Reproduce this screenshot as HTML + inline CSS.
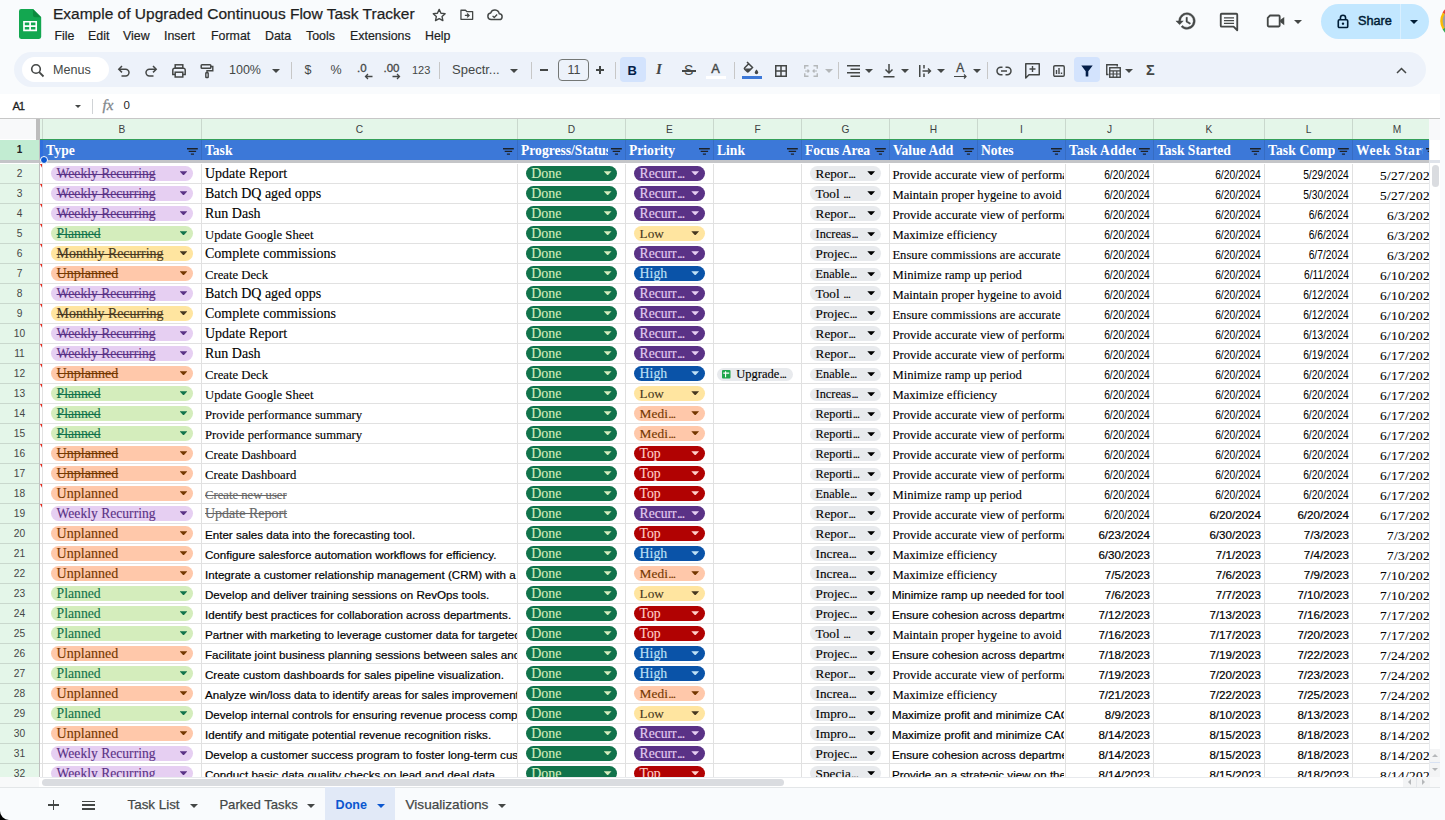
<!DOCTYPE html><html lang="en"><head><meta charset="utf-8"><title>Example of Upgraded Continuous Flow Task Tracker</title><style>
*{box-sizing:border-box}
html,body{margin:0;padding:0}
body{width:1445px;height:820px;position:relative;overflow:hidden;background:#f9fbfd;font-family:"Liberation Sans",sans-serif;color:#1f1f1f}
.abs,.t{position:absolute}
.t{white-space:nowrap;line-height:1}
svg{position:absolute;overflow:visible}
#grid{position:absolute;left:0;top:118px;width:1440px;height:669px;background:#fff;overflow:hidden}
.c{position:absolute;overflow:hidden;white-space:nowrap;height:19px}
.sb,.ss,.sg,.chip b{-webkit-text-stroke:.12px currentColor}
.sa,.da{-webkit-text-stroke:.2px currentColor}
.dm{-webkit-text-stroke:.1px currentColor}
.c span.x{position:absolute;left:3px;bottom:2px;line-height:1}
.c span.r{position:absolute;right:3px;bottom:2px;line-height:1}
.sb{font-family:"Liberation Serif",serif;font-size:14px;color:#000;bottom:1.800px !important}
.ss{font-family:"Liberation Serif",serif;font-size:12.7px;color:#000;bottom:1px !important}
.sa{font-family:"Liberation Sans",sans-serif;font-size:11.6px;color:#000}
.sg{font-family:"Liberation Serif",serif;color:#666;text-decoration:line-through}
.dn{font-family:"Liberation Sans",sans-serif;font-size:13px;color:#000;transform:scaleX(.79);transform-origin:100% 50%;display:inline-block}
.da{font-family:"Liberation Sans",sans-serif;font-size:11.6px;color:#000}
.dm{font-family:"Liberation Serif",serif;font-size:13.4px;color:#000;letter-spacing:.3px;bottom:1px !important}
.chip{position:absolute;top:1.500px;height:15.500px;border-radius:8px;font-family:"Liberation Serif",serif;line-height:15.500px;overflow:hidden;white-space:nowrap}
.chip.sm{top:3.600px;height:13.500px;line-height:13.500px;border-radius:7px}
.chip b{font-weight:400;position:absolute;left:6px;top:.2px}
.chip u{text-decoration:none;letter-spacing:-1px;margin-left:.3px}
.chip i{position:absolute;right:5.900px;top:5.700px;width:7.800px;height:4.200px;background:currentColor;clip-path:polygon(0 0,100% 0,50% 100%)}
.chip.sm i{top:4.700px}
.st{text-decoration:line-through;text-decoration-thickness:1px}
.rh{position:absolute;left:0;width:39px;height:19px;background:#e4f6e9;font-size:10.200px;color:#444746;text-align:center;line-height:19px}
.ch{position:absolute;top:1px;height:20px;background:#e4f6e9;font-size:10.200px;color:#3c4043;text-align:center;line-height:22px}
.hd{position:absolute;top:22px;height:20px;background:#3c78d8;color:#fff;font-family:"Liberation Serif",serif;font-weight:700;font-size:13.6px;overflow:hidden;white-space:nowrap}
.hd span{position:absolute;left:3px;top:3.500px;line-height:1}
.hd em{position:absolute;right:0;top:0;width:18px;height:20px;background:#3c78d8}
.vl{position:absolute;width:1px;background:#e1e1e1}
.hl{position:absolute;height:1px;background:#e1e1e1;left:40px;width:1389px}
.nt{position:absolute;left:40px;width:2.600px;height:4.800px;background:#e8261b;clip-path:polygon(0 0,100% 0,100% 100%)}
</style></head><body>
<svg style="left:18.600px;top:9.100px" width="22.200" height="30" viewBox="0 0 23 31">
<path d="M2.200 0h12.300L23 8.500V28.800a2.200 2.200 0 0 1-2.200 2.200H2.200A2.200 2.200 0 0 1 0 28.800V2.200A2.200 2.200 0 0 1 2.200 0z" fill="#13a750"/>
<path d="M14.500 0L23 8.500h-6.300a2.200 2.200 0 0 1-2.200-2.200z" fill="#0c8a3e"/>
<path d="M4.300 12.300h14.400v10.600H4.300zM6 14v2.700h4.600V14zm6.400 0v2.700H17V14zM6 18.500v2.700h4.600v-2.700zm6.400 0v2.700H17v-2.700z" fill="#fff" fill-rule="evenodd"/>
</svg>
<div class="t" style="left:53px;top:6px;font-size:15.5px;color:#1f1f1f;font-weight:400;-webkit-text-stroke:.25px">Example of Upgraded Continuous Flow Task Tracker</div>
<svg style="left:430.600px;top:6.800px" width="16.400" height="16.400" viewBox="0 0 24 24"><path d="M12 3.5l2.6 5.6 6.1.7-4.5 4.2 1.2 6-5.4-3-5.4 3 1.2-6-4.5-4.2 6.1-.7z" fill="none" stroke="#444746" stroke-width="2" stroke-linejoin="round"/></svg>
<svg style="left:459px;top:7px" width="15.600" height="15.600" viewBox="0 0 24 24"><path d="M3 5h7l2 2h9v12H3z" fill="none" stroke="#444746" stroke-width="2" stroke-linejoin="round"/><path d="M9 13h6m-2.5-3l3 3-3 3" fill="none" stroke="#444746" stroke-width="2"/></svg>
<svg style="left:485.500px;top:6.300px" width="17.600" height="17.600" viewBox="0 0 24 24"><path d="M7 18.5a4.5 4.5 0 0 1-.6-8.95A6 6 0 0 1 18 10.5a4 4 0 0 1 0 8z" fill="none" stroke="#444746" stroke-width="2" stroke-linejoin="round"/><path d="M9 13.5l2.2 2.2 4-4" fill="none" stroke="#444746" stroke-width="1.8"/></svg>
<div class="t" style="left:54.4px;top:29.7px;font-size:12.4px;color:#1f1f1f;font-weight:400;-webkit-text-stroke:.2px">File</div>
<div class="t" style="left:88px;top:29.7px;font-size:12.4px;color:#1f1f1f;font-weight:400;-webkit-text-stroke:.2px">Edit</div>
<div class="t" style="left:123px;top:29.7px;font-size:12.4px;color:#1f1f1f;font-weight:400;-webkit-text-stroke:.2px">View</div>
<div class="t" style="left:164px;top:29.7px;font-size:12.4px;color:#1f1f1f;font-weight:400;-webkit-text-stroke:.2px">Insert</div>
<div class="t" style="left:211px;top:29.7px;font-size:12.4px;color:#1f1f1f;font-weight:400;-webkit-text-stroke:.2px">Format</div>
<div class="t" style="left:265px;top:29.7px;font-size:12.4px;color:#1f1f1f;font-weight:400;-webkit-text-stroke:.2px">Data</div>
<div class="t" style="left:306px;top:29.7px;font-size:12.4px;color:#1f1f1f;font-weight:400;-webkit-text-stroke:.2px">Tools</div>
<div class="t" style="left:350px;top:29.7px;font-size:12.4px;color:#1f1f1f;font-weight:400;-webkit-text-stroke:.2px">Extensions</div>
<div class="t" style="left:425px;top:29.7px;font-size:12.4px;color:#1f1f1f;font-weight:400;-webkit-text-stroke:.2px">Help</div>
<svg style="left:1175px;top:10px" width="22" height="22" viewBox="0 0 24 24"><path d="M13 3a9 9 0 0 0-9 9H1l3.9 3.9.1.1L9 12H6a7 7 0 1 1 2.05 4.95l-1.4 1.4A9 9 0 1 0 13 3zm-1 5v5l4.25 2.5.75-1.25-3.5-2.1V8z" fill="#444746" stroke="#444746" stroke-width=".5"/></svg>
<svg style="left:1218px;top:11px" width="22" height="22" viewBox="0 0 24 24"><path d="M4 3h16a1 1 0 0 1 1 1v17l-4-4H4a1 1 0 0 1-1-1V4a1 1 0 0 1 1-1z" fill="none" stroke="#444746" stroke-width="2" stroke-linejoin="round"/><path d="M6.5 7.5h11M6.5 10.5h11M6.5 13.5h11" stroke="#444746" stroke-width="1.6"/></svg>
<svg style="left:1265px;top:10px" width="22" height="22" viewBox="0 0 24 24"><path d="M5.5 6H15a1 1 0 0 1 1 1v10a1 1 0 0 1-1 1H4a1 1 0 0 1-1-1V8.5z" fill="none" stroke="#444746" stroke-width="2" stroke-linejoin="round"/><path d="M16.5 11l4.5-3.5v9L16.5 13z" fill="#444746"/></svg>
<div class="abs" style="left:1293.5px;top:19.5px;border-left:4px solid transparent;border-right:4px solid transparent;border-top:4px solid #444746"></div>
<div class="abs" style="left:1321px;top:4px;width:108px;height:35px;border-radius:18px;background:#c2e7ff"></div>
<div class="abs" style="left:1399.5px;top:4px;width:1.5px;height:35px;background:#d9efff"></div>
<svg style="left:1337px;top:13.500px" width="12" height="15" viewBox="0 0 14 17"><rect x="1.5" y="6.5" width="11" height="9" rx="1.3" fill="none" stroke="#001d35" stroke-width="1.9"/><path d="M4 6.500V4.200a3 3 0 0 1 6 0v2.300" fill="none" stroke="#001d35" stroke-width="1.900"/><circle cx="7" cy="11" r="1.400" fill="#001d35"/></svg>
<div class="t" style="left:1358px;top:14.8px;font-size:12.7px;color:#001d35;font-weight:400;-webkit-text-stroke:.45px">Share</div>
<div class="abs" style="left:1410px;top:19.5px;border-left:4.5px solid transparent;border-right:4.5px solid transparent;border-top:4.5px solid #001d35"></div>
<svg style="left:1439.500px;top:4px" width="34" height="34" viewBox="0 0 34 34"><circle cx="17" cy="17" r="15.5" fill="#9aa0a6"/><path d="M17 1.5A15.500 15.500 0 0 0 3.600 9.300" fill="none" stroke="#ea4335" stroke-width="2.4"/><path d="M3.600 9.300A15.500 15.500 0 0 0 3.600 24.700" fill="none" stroke="#fbbc04" stroke-width="2.4"/><path d="M3.600 24.700A15.500 15.500 0 0 0 17 32.500" fill="none" stroke="#34a853" stroke-width="2.4"/></svg>
<div class="abs" style="left:14px;top:52px;width:1412px;height:35px;border-radius:18px;background:#edf2fa"></div>
<div class="abs" style="left:22px;top:57px;width:87px;height:25px;border-radius:13px;background:#fff"></div>
<div class="abs" style="left:0;top:.8px;width:0;height:0">
<svg style="left:30px;top:62px" width="15" height="15" viewBox="0 0 15 15"><circle cx="6" cy="6" r="4.3" fill="none" stroke="#444746" stroke-width="1.6"/><path d="M9.2 9.2l4.3 4.3" stroke="#444746" stroke-width="1.8"/></svg>
<div class="t" style="left:53px;top:63px;font-size:12.6px;color:#444746;font-weight:400;">Menus</div>
<svg style="left:117px;top:63px" width="14" height="14" viewBox="0 0 14 14"><path d="M2 5.2h6.6a3.4 3.4 0 0 1 0 6.8H4.5" fill="none" stroke="#444746" stroke-width="1.5"/><path d="M5 2L1.8 5.2 5 8.4" fill="none" stroke="#444746" stroke-width="1.5"/></svg>
<svg style="left:144px;top:63px" width="14" height="14" viewBox="0 0 14 14"><path d="M12 5.2H5.4a3.4 3.4 0 0 0 0 6.8h4.1" fill="none" stroke="#444746" stroke-width="1.5"/><path d="M9 2l3.2 3.2L9 8.4" fill="none" stroke="#444746" stroke-width="1.5"/></svg>
<svg style="left:171px;top:62px" width="16" height="16" viewBox="0 0 16 16"><rect x="4.2" y="1.8" width="7.6" height="3.4" fill="none" stroke="#444746" stroke-width="1.5"/><path d="M4 11.5H1.8V7a1.7 1.7 0 0 1 1.7-1.7h9A1.7 1.7 0 0 1 14.200 7v4.500H12" fill="none" stroke="#444746" stroke-width="1.5"/><rect x="4.2" y="9.2" width="7.6" height="4.8" fill="none" stroke="#444746" stroke-width="1.5"/></svg>
<svg style="left:199px;top:62px" width="16" height="16" viewBox="0 0 16 16"><rect x="2.2" y="1.7" width="9.600" height="3.6" rx=".8" fill="none" stroke="#444746" stroke-width="1.5"/><path d="M11.8 3.500h2v4.200H8v2.300" fill="none" stroke="#444746" stroke-width="1.4"/><rect x="6.800" y="9.800" width="2.400" height="4.700" rx=".5" fill="none" stroke="#444746" stroke-width="1.4"/></svg>
<div class="t" style="left:229px;top:63.5px;font-size:12.5px;color:#444746;font-weight:400;">100%</div>
<div class="abs" style="left:272px;top:68.3px;border-left:4px solid transparent;border-right:4px solid transparent;border-top:4px solid #444746"></div>
<div class="abs" style="left:290.5px;top:61px;width:1px;height:17px;background:#c7c7c7"></div>
<div class="t" style="left:304.5px;top:63px;font-size:12.5px;color:#444746;font-weight:400;">$</div>
<div class="t" style="left:330.5px;top:63px;font-size:12.5px;color:#444746;font-weight:400;">%</div>
<div class="t" style="left:357px;top:62px;font-size:11.5px;color:#444746;font-weight:400;-webkit-text-stroke:.3px">.0</div>
<svg style="left:364px;top:72px" width="9" height="7" viewBox="0 0 9 7"><path d="M8.500 3.500H1.500M4 1L1.500 3.500 4 6" fill="none" stroke="#444746" stroke-width="1.3"/></svg>
<div class="t" style="left:383.5px;top:62px;font-size:11.5px;color:#444746;font-weight:400;-webkit-text-stroke:.3px">.00</div>
<svg style="left:392px;top:72px" width="9" height="7" viewBox="0 0 9 7"><path d="M.5 3.500h7M5 1l2.500 2.500L5 6" fill="none" stroke="#444746" stroke-width="1.3"/></svg>
<div class="t" style="left:412px;top:64px;font-size:11px;color:#444746;font-weight:400;">123</div>
<div class="abs" style="left:438.5px;top:61px;width:1px;height:17px;background:#c7c7c7"></div>
<div class="t" style="left:452px;top:62.5px;font-size:13px;color:#444746;font-weight:400;">Spectr...</div>
<div class="abs" style="left:510px;top:68.3px;border-left:4px solid transparent;border-right:4px solid transparent;border-top:4px solid #444746"></div>
<div class="abs" style="left:530.5px;top:61px;width:1px;height:17px;background:#c7c7c7"></div>
<div class="abs" style="left:540.300px;top:68.600px;width:8px;height:1.300px;background:#444746"></div>
<div class="abs" style="left:558.300px;top:58.300px;width:30.400px;height:21.500px;border:1px solid #747775;border-radius:4px"></div>
<div class="t" style="left:567.5px;top:63.5px;font-size:12.5px;color:#444746;font-weight:400;">11</div>
<div class="abs" style="left:595.800px;top:68.600px;width:8.600px;height:1.300px;background:#444746"></div><div class="abs" style="left:599.450px;top:64.950px;width:1.300px;height:8.600px;background:#444746"></div>
<div class="abs" style="left:615.0px;top:61px;width:1px;height:17px;background:#c7c7c7"></div>
<div class="abs" style="left:620px;top:56px;width:26px;height:25.500px;border-radius:4px;background:#d3e3fd"></div>
<div class="t" style="left:627.5px;top:63px;font-size:13px;color:#041e49;font-weight:700;">B</div>
<div class="t" style="left:656px;top:61.5px;font-size:15px;color:#444746;font-weight:400;font-family:'Liberation Serif', serif;font-style:italic;font-weight:700">I</div>
<div class="t" style="left:684px;top:62px;font-size:14px;color:#444746;font-weight:400;">S</div>
<div class="abs" style="left:681.500px;top:69.400px;width:14px;height:1.500px;background:#444746"></div>
<div class="t" style="left:711.3px;top:61.8px;font-size:12.8px;color:#444746;font-weight:400;-webkit-text-stroke:.4px">A</div>
<div class="abs" style="left:706px;top:75.500px;width:20px;height:3px;background:#fff"></div>
<div class="abs" style="left:734.0px;top:61px;width:1px;height:17px;background:#c7c7c7"></div>
<svg style="left:744px;top:60px" width="16" height="14" viewBox="0 0 16 14"><path d="M3 1l5.500 5.500-4 4a1 1 0 0 1-1.400 0L.7 8.100a1 1 0 0 1 0-1.400L5 2.500" fill="none" stroke="#444746" stroke-width="1.500"/><path d="M1 7.500h7L4 11z" fill="#444746"/><path d="M12.500 8.500s1.700 1.900 1.700 3a1.700 1.700 0 0 1-3.400 0c0-1.100 1.700-3 1.700-3z" fill="#444746"/></svg>
<div class="abs" style="left:742px;top:75.500px;width:20px;height:3px;background:#3c78d8"></div>
<svg style="left:775px;top:64px" width="12" height="12" viewBox="0 0 12 12"><rect x=".75" y=".75" width="10.500" height="10.500" fill="none" stroke="#444746" stroke-width="1.500"/><path d="M6 .5v11M.5 6h11" stroke="#444746" stroke-width="1.500"/></svg>
<svg style="left:804px;top:64px" width="14" height="12" viewBox="0 0 14 12"><path d="M4.500 .75H.75v3M9.500 .75h3.750v3M4.500 11.250H.75v-3M9.500 11.250h3.750v-3" fill="none" stroke="#b4b7b9" stroke-width="1.400"/><path d="M1 6h4M3.500 4.500L5 6 3.500 7.500M13 6H9M10.500 4.500L9 6l1.500 1.500" fill="none" stroke="#b4b7b9" stroke-width="1.200"/></svg>
<div class="abs" style="left:825px;top:68.3px;border-left:4px solid transparent;border-right:4px solid transparent;border-top:4px solid #b4b7b9"></div>
<div class="abs" style="left:837.5px;top:61px;width:1px;height:17px;background:#c7c7c7"></div>
<svg style="left:847px;top:64px" width="13" height="12" viewBox="0 0 13 12"><path d="M0 .75h13M3.500 4.250H13M0 7.750h13M3.500 11.250H13" stroke="#444746" stroke-width="1.400"/></svg>
<div class="abs" style="left:865px;top:68.3px;border-left:4px solid transparent;border-right:4px solid transparent;border-top:4px solid #444746"></div>
<svg style="left:883px;top:63px" width="12" height="14" viewBox="0 0 12 14"><path d="M6 0v9M2.500 5.500L6 9l3.500-3.500" fill="none" stroke="#444746" stroke-width="1.500"/><path d="M.5 12.750h11" stroke="#444746" stroke-width="1.500"/></svg>
<div class="abs" style="left:901px;top:68.3px;border-left:4px solid transparent;border-right:4px solid transparent;border-top:4px solid #444746"></div>
<svg style="left:919px;top:64px" width="13" height="12" viewBox="0 0 13 12"><path d="M.75 0v12M5 0v3.500M5 8.500V12" stroke="#444746" stroke-width="1.500"/><path d="M3.500 6h8M9 3.500L11.500 6 9 8.500" fill="none" stroke="#444746" stroke-width="1.400"/></svg>
<div class="abs" style="left:937px;top:68.3px;border-left:4px solid transparent;border-right:4px solid transparent;border-top:4px solid #444746"></div>
<div class="t" style="left:956.3px;top:61.5px;font-size:12px;color:#444746;font-weight:400;-webkit-text-stroke:.3px">A</div>
<svg style="left:954px;top:73px" width="14" height="6" viewBox="0 0 14 6"><path d="M0 2.500h12M10 .5l2 2-2 2" fill="none" stroke="#444746" stroke-width="1.200"/></svg>
<div class="abs" style="left:973px;top:68.3px;border-left:4px solid transparent;border-right:4px solid transparent;border-top:4px solid #444746"></div>
<div class="abs" style="left:987.0px;top:61px;width:1px;height:17px;background:#c7c7c7"></div>
<svg style="left:996px;top:65px" width="16" height="10" viewBox="0 0 16 10"><path d="M6.500 1.250H4.750a3.750 3.750 0 0 0 0 7.500H6.500M9.500 1.250h1.750a3.750 3.750 0 0 1 0 7.500H9.500M5 5h6" fill="none" stroke="#444746" stroke-width="1.500"/></svg>
<svg style="left:1025px;top:62px" width="15" height="16" viewBox="0 0 15 16"><path d="M.75 .75h13.500v11H4L.75 15z" fill="none" stroke="#444746" stroke-width="1.500" stroke-linejoin="round"/><path d="M7.500 3v6M4.500 6h6" stroke="#444746" stroke-width="1.400"/></svg>
<svg style="left:1053px;top:64px" width="12" height="12" viewBox="0 0 12 12"><rect x=".75" y=".75" width="10.500" height="10.500" rx="1.200" fill="none" stroke="#444746" stroke-width="1.400"/><path d="M3.500 9V5M6 9V3M8.500 9V7.500" stroke="#444746" stroke-width="1.400"/></svg>
<div class="abs" style="left:1074px;top:56px;width:26px;height:25.500px;border-radius:4px;background:#d3e3fd"></div>
<svg style="left:1081px;top:64px" width="12" height="12" viewBox="0 0 12 12"><path d="M.3 .5h11.400L7.300 6.200V11.500H4.700V6.200z" fill="#041e49"/></svg>
<svg style="left:1106px;top:63px" width="15" height="14" viewBox="0 0 15 14"><path d="M2.500 10.500H.75V.75h10.500V2.500" fill="none" stroke="#444746" stroke-width="1.400"/><rect x="3.750" y="3.750" width="10.500" height="9.500" fill="none" stroke="#444746" stroke-width="1.400"/><path d="M3.500 6.800h11M7.200 6.800V13.500M10.800 6.800V13.500M3.500 10h11" stroke="#444746" stroke-width="1.200"/></svg>
<div class="abs" style="left:1125px;top:68.3px;border-left:4px solid transparent;border-right:4px solid transparent;border-top:4px solid #444746"></div>
<div class="t" style="left:1146px;top:61.8px;font-size:14.5px;color:#444746;font-weight:700;">Σ</div>
<svg style="left:1396px;top:66px" width="11" height="7" viewBox="0 0 11 7"><path d="M1 6l4.500-4.500L10 6" fill="none" stroke="#444746" stroke-width="1.500"/></svg>
</div>
<div class="abs" style="left:0;top:94px;width:1440px;height:25px;background:#fff"></div>
<div class="t" style="left:12.5px;top:100.5px;font-size:11.3px;color:#1f1f1f;font-weight:400;letter-spacing:-1.300px;-webkit-text-stroke:.3px">A1</div>
<div class="abs" style="left:74.5px;top:104.55px;border-left:3.5px solid transparent;border-right:3.5px solid transparent;border-top:3.5px solid #444746"></div>
<div class="abs" style="left:92.300px;top:99px;width:1px;height:14.500px;background:#d0d3d6"></div>
<div class="t" style="left:102.5px;top:97.8px;font-size:15px;color:#80868b;font-weight:400;font-family:'Liberation Serif', serif;font-style:italic;-webkit-text-stroke:.3px">fx</div>
<div class="t" style="left:123.5px;top:100px;font-size:11.5px;color:#1f1f1f;font-weight:400;">0</div>
<div id="grid">
<div class="abs" style="left:0;top:0;width:1441px;height:1px;background:#c7c7c7"></div>
<div class="abs" style="left:0;top:1px;width:36px;height:20px;background:#f8f9fa"></div>
<div class="abs" style="left:36px;top:1px;width:4px;height:21px;background:#bdbdbd"></div>
<div class="ch" style="left:40px;width:2px"></div>
<div class="vl" style="left:42px;top:1px;height:20px;background:#c9d8cd"></div>
<div class="ch" style="left:43px;width:158px">B</div>
<div class="vl" style="left:201px;top:1px;height:20px;background:#c9d8cd"></div>
<div class="ch" style="left:202px;width:315px">C</div>
<div class="vl" style="left:517px;top:1px;height:20px;background:#c9d8cd"></div>
<div class="ch" style="left:518px;width:107px">D</div>
<div class="vl" style="left:625px;top:1px;height:20px;background:#c9d8cd"></div>
<div class="ch" style="left:626px;width:87px">E</div>
<div class="vl" style="left:713px;top:1px;height:20px;background:#c9d8cd"></div>
<div class="ch" style="left:714px;width:87px">F</div>
<div class="vl" style="left:801px;top:1px;height:20px;background:#c9d8cd"></div>
<div class="ch" style="left:802px;width:87px">G</div>
<div class="vl" style="left:889px;top:1px;height:20px;background:#c9d8cd"></div>
<div class="ch" style="left:890px;width:87px">H</div>
<div class="vl" style="left:977px;top:1px;height:20px;background:#c9d8cd"></div>
<div class="ch" style="left:978px;width:87px">I</div>
<div class="vl" style="left:1065px;top:1px;height:20px;background:#c9d8cd"></div>
<div class="ch" style="left:1066px;width:87px">J</div>
<div class="vl" style="left:1153px;top:1px;height:20px;background:#c9d8cd"></div>
<div class="ch" style="left:1154px;width:110px">K</div>
<div class="vl" style="left:1264px;top:1px;height:20px;background:#c9d8cd"></div>
<div class="ch" style="left:1265px;width:87px">L</div>
<div class="vl" style="left:1352px;top:1px;height:20px;background:#c9d8cd"></div>
<div class="ch" style="left:1353px;width:76px"><span style="position:absolute;left:0;width:88px;text-align:center">M</span></div>
<div class="abs" style="left:40px;top:21px;width:1389px;height:1.500px;background:#34a05a"></div>
<div class="rh" style="top:22px;height:20px;background:#c2ecd2;color:#202124;font-weight:700;font-size:10px;line-height:20px">1</div>
<div class="hd" style="left:40px;width:3px;background:#2f6fde"></div>
<div class="hd" style="left:43px;width:159px"><span style="letter-spacing:.15px">Type</span><em></em><svg style="right:4.400px;top:7.600px" width="10.800" height="7" viewBox="0 0 10.800 7"><path d="M0 .7h10.800M1.700 3.400h7.400M3.900 6.100h3.100" stroke="#1d2228" stroke-width="1.400"/></svg></div>
<div class="vl" style="left:201px;top:22px;height:20px;background:#366cc2"></div>
<div class="hd" style="left:202px;width:316px"><span>Task</span><em></em><svg style="right:4.400px;top:7.600px" width="10.800" height="7" viewBox="0 0 10.800 7"><path d="M0 .7h10.800M1.700 3.400h7.400M3.900 6.100h3.100" stroke="#1d2228" stroke-width="1.400"/></svg></div>
<div class="vl" style="left:517px;top:22px;height:20px;background:#366cc2"></div>
<div class="hd" style="left:518px;width:108px"><span>Progress/Status</span><em></em><svg style="right:4.400px;top:7.600px" width="10.800" height="7" viewBox="0 0 10.800 7"><path d="M0 .7h10.800M1.700 3.400h7.400M3.900 6.100h3.100" stroke="#1d2228" stroke-width="1.400"/></svg></div>
<div class="vl" style="left:625px;top:22px;height:20px;background:#366cc2"></div>
<div class="hd" style="left:626px;width:88px"><span>Priority</span><em></em><svg style="right:4.400px;top:7.600px" width="10.800" height="7" viewBox="0 0 10.800 7"><path d="M0 .7h10.800M1.700 3.400h7.400M3.900 6.100h3.100" stroke="#1d2228" stroke-width="1.400"/></svg></div>
<div class="vl" style="left:713px;top:22px;height:20px;background:#366cc2"></div>
<div class="hd" style="left:714px;width:88px"><span>Link</span><em></em><svg style="right:4.400px;top:7.600px" width="10.800" height="7" viewBox="0 0 10.800 7"><path d="M0 .7h10.800M1.700 3.400h7.400M3.900 6.100h3.100" stroke="#1d2228" stroke-width="1.400"/></svg></div>
<div class="vl" style="left:801px;top:22px;height:20px;background:#366cc2"></div>
<div class="hd" style="left:802px;width:88px"><span>Focus Area</span><em></em><svg style="right:4.400px;top:7.600px" width="10.800" height="7" viewBox="0 0 10.800 7"><path d="M0 .7h10.800M1.700 3.400h7.400M3.900 6.100h3.100" stroke="#1d2228" stroke-width="1.400"/></svg></div>
<div class="vl" style="left:889px;top:22px;height:20px;background:#366cc2"></div>
<div class="hd" style="left:890px;width:88px"><span>Value Add</span><em></em><svg style="right:4.400px;top:7.600px" width="10.800" height="7" viewBox="0 0 10.800 7"><path d="M0 .7h10.800M1.700 3.400h7.400M3.900 6.100h3.100" stroke="#1d2228" stroke-width="1.400"/></svg></div>
<div class="vl" style="left:977px;top:22px;height:20px;background:#366cc2"></div>
<div class="hd" style="left:978px;width:88px"><span>Notes</span><em></em><svg style="right:4.400px;top:7.600px" width="10.800" height="7" viewBox="0 0 10.800 7"><path d="M0 .7h10.800M1.700 3.400h7.400M3.900 6.100h3.100" stroke="#1d2228" stroke-width="1.400"/></svg></div>
<div class="vl" style="left:1065px;top:22px;height:20px;background:#366cc2"></div>
<div class="hd" style="left:1066px;width:88px"><span style="letter-spacing:.2px">Task Added</span><em></em><svg style="right:4.400px;top:7.600px" width="10.800" height="7" viewBox="0 0 10.800 7"><path d="M0 .7h10.800M1.700 3.400h7.400M3.900 6.100h3.100" stroke="#1d2228" stroke-width="1.400"/></svg></div>
<div class="vl" style="left:1153px;top:22px;height:20px;background:#366cc2"></div>
<div class="hd" style="left:1154px;width:111px"><span>Task Started</span><em></em><svg style="right:4.400px;top:7.600px" width="10.800" height="7" viewBox="0 0 10.800 7"><path d="M0 .7h10.800M1.700 3.400h7.400M3.900 6.100h3.100" stroke="#1d2228" stroke-width="1.400"/></svg></div>
<div class="vl" style="left:1264px;top:22px;height:20px;background:#366cc2"></div>
<div class="hd" style="left:1265px;width:88px"><span style="letter-spacing:.12px">Task Completed</span><em></em><svg style="right:4.400px;top:7.600px" width="10.800" height="7" viewBox="0 0 10.800 7"><path d="M0 .7h10.800M1.700 3.400h7.400M3.900 6.100h3.100" stroke="#1d2228" stroke-width="1.400"/></svg></div>
<div class="vl" style="left:1352px;top:22px;height:20px;background:#366cc2"></div>
<div class="hd" style="left:1353px;width:88px"><span style="letter-spacing:.58px">Week Start</span><em></em><svg style="right:4.400px;top:7.600px" width="10.800" height="7" viewBox="0 0 10.800 7"><path d="M0 .7h10.800M1.700 3.400h7.400M3.900 6.100h3.100" stroke="#1d2228" stroke-width="1.400"/></svg></div>
<div class="abs" style="left:0;top:41.900px;width:1429px;height:3.600px;background:#c4c5c8"></div>
<div class="abs" style="left:39px;top:22px;width:1px;height:640px;background:#c0c0c0"></div>
<div class="rh" style="top:46px">2</div>
<div class="abs" style="left:0;top:65px;width:39px;height:1px;background:#c9d8cd"></div>
<div class="hl" style="top:65px"></div>
<div class="nt" style="top:46px"></div>
<div class="c" style="left:43px;top:46px;width:158px"><div class="chip" style="left:7.6px;width:142.7px;background:#e6cff2;color:#5a3286"><b class="st" style="left:6px;font-size:13.6px">Weekly Recurring</b><i></i></div></div>
<div class="c" style="left:202px;top:46px;width:315px"><span class="x sb" style="">Update Report</span></div>
<div class="c" style="left:518px;top:46px;width:107px"><div class="chip" style="left:8px;width:91.4px;background:#11734b;color:#d4edbc"><b style="left:5.2px;font-size:13.95px">Done</b><i></i></div></div>
<div class="c" style="left:626px;top:46px;width:87px"><div class="chip" style="left:7.6px;width:71.4px;background:#5a3286;color:#e6cff2"><b style="left:6px;font-size:13.6px">Recurr<u>...</u></b><i></i></div></div>
<div class="c" style="left:802px;top:46px;width:87px"><div class="chip" style="left:7.6px;width:71.4px;background:#e8eaed;color:#000"><b style="left:6px;font-size:13.2px">Repor<u>...</u></b><i></i></div></div>
<div class="c" style="left:890px;top:46px;width:174px"><span class="x ss" style="font-size:12.650px;left:2.400px">Provide accurate view of performance</span></div>
<div class="c" style="left:1066px;top:46px;width:87px"><span class="r dn">6/20/2024</span></div>
<div class="c" style="left:1154px;top:46px;width:110px"><span class="r dn">6/20/2024</span></div>
<div class="c" style="left:1265px;top:46px;width:87px"><span class="r dn">5/29/2024</span></div>
<div class="c" style="left:1353px;top:46px;width:76px"><span class="x dm" style="left:auto;right:-1px">5/27/202</span></div>
<div class="rh" style="top:66px">3</div>
<div class="abs" style="left:0;top:85px;width:39px;height:1px;background:#c9d8cd"></div>
<div class="hl" style="top:85px"></div>
<div class="nt" style="top:66px"></div>
<div class="c" style="left:43px;top:66px;width:158px"><div class="chip" style="left:7.6px;width:142.7px;background:#e6cff2;color:#5a3286"><b class="st" style="left:6px;font-size:13.6px">Weekly Recurring</b><i></i></div></div>
<div class="c" style="left:202px;top:66px;width:315px"><span class="x sb" style="">Batch DQ aged opps</span></div>
<div class="c" style="left:518px;top:66px;width:107px"><div class="chip" style="left:8px;width:91.4px;background:#11734b;color:#d4edbc"><b style="left:5.2px;font-size:13.95px">Done</b><i></i></div></div>
<div class="c" style="left:626px;top:66px;width:87px"><div class="chip" style="left:7.6px;width:71.4px;background:#5a3286;color:#e6cff2"><b style="left:6px;font-size:13.6px">Recurr<u>...</u></b><i></i></div></div>
<div class="c" style="left:802px;top:66px;width:87px"><div class="chip" style="left:7.6px;width:71.4px;background:#e8eaed;color:#000"><b style="left:6px;font-size:13.2px">Tool&nbsp;<u>...</u></b><i></i></div></div>
<div class="c" style="left:890px;top:66px;width:174px"><span class="x ss" style="font-size:12.650px;left:2.400px">Maintain proper hygeine to avoid</span></div>
<div class="c" style="left:1066px;top:66px;width:87px"><span class="r dn">6/20/2024</span></div>
<div class="c" style="left:1154px;top:66px;width:110px"><span class="r dn">6/20/2024</span></div>
<div class="c" style="left:1265px;top:66px;width:87px"><span class="r dn">5/30/2024</span></div>
<div class="c" style="left:1353px;top:66px;width:76px"><span class="x dm" style="left:auto;right:-1px">5/27/202</span></div>
<div class="rh" style="top:86px">4</div>
<div class="abs" style="left:0;top:105px;width:39px;height:1px;background:#c9d8cd"></div>
<div class="hl" style="top:105px"></div>
<div class="nt" style="top:86px"></div>
<div class="c" style="left:43px;top:86px;width:158px"><div class="chip" style="left:7.6px;width:142.7px;background:#e6cff2;color:#5a3286"><b class="st" style="left:6px;font-size:13.6px">Weekly Recurring</b><i></i></div></div>
<div class="c" style="left:202px;top:86px;width:315px"><span class="x sb" style="">Run Dash</span></div>
<div class="c" style="left:518px;top:86px;width:107px"><div class="chip" style="left:8px;width:91.4px;background:#11734b;color:#d4edbc"><b style="left:5.2px;font-size:13.95px">Done</b><i></i></div></div>
<div class="c" style="left:626px;top:86px;width:87px"><div class="chip" style="left:7.6px;width:71.4px;background:#5a3286;color:#e6cff2"><b style="left:6px;font-size:13.6px">Recurr<u>...</u></b><i></i></div></div>
<div class="c" style="left:802px;top:86px;width:87px"><div class="chip" style="left:7.6px;width:71.4px;background:#e8eaed;color:#000"><b style="left:6px;font-size:13.2px">Repor<u>...</u></b><i></i></div></div>
<div class="c" style="left:890px;top:86px;width:174px"><span class="x ss" style="font-size:12.650px;left:2.400px">Provide accurate view of performance</span></div>
<div class="c" style="left:1066px;top:86px;width:87px"><span class="r dn">6/20/2024</span></div>
<div class="c" style="left:1154px;top:86px;width:110px"><span class="r dn">6/20/2024</span></div>
<div class="c" style="left:1265px;top:86px;width:87px"><span class="r dn">6/6/2024</span></div>
<div class="c" style="left:1353px;top:86px;width:76px"><span class="x dm" style="left:auto;right:-1px">6/3/202</span></div>
<div class="rh" style="top:106px">5</div>
<div class="abs" style="left:0;top:125px;width:39px;height:1px;background:#c9d8cd"></div>
<div class="hl" style="top:125px"></div>
<div class="nt" style="top:106px"></div>
<div class="c" style="left:43px;top:106px;width:158px"><div class="chip" style="left:7.6px;width:142.7px;background:#d4edbc;color:#11734b"><b class="st" style="left:6px;font-size:13.7px">Planned</b><i></i></div></div>
<div class="c" style="left:202px;top:106px;width:315px"><span class="x ss" style="">Update Google Sheet</span></div>
<div class="c" style="left:518px;top:106px;width:107px"><div class="chip" style="left:8px;width:91.4px;background:#11734b;color:#d4edbc"><b style="left:5.2px;font-size:13.95px">Done</b><i></i></div></div>
<div class="c" style="left:626px;top:106px;width:87px"><div class="chip" style="left:7.6px;width:71.4px;background:#ffe5a0;color:#473821"><b style="left:6px;font-size:13.2px">Low</b><i></i></div></div>
<div class="c" style="left:802px;top:106px;width:87px"><div class="chip sm" style="left:7.6px;width:71.4px;background:#e8eaed;color:#000"><b style="left:6px;font-size:12.3px">Increas<u>...</u></b><i></i></div></div>
<div class="c" style="left:890px;top:106px;width:174px"><span class="x ss" style="font-size:12.650px;left:2.400px">Maximize efficiency</span></div>
<div class="c" style="left:1066px;top:106px;width:87px"><span class="r dn">6/20/2024</span></div>
<div class="c" style="left:1154px;top:106px;width:110px"><span class="r dn">6/20/2024</span></div>
<div class="c" style="left:1265px;top:106px;width:87px"><span class="r dn">6/6/2024</span></div>
<div class="c" style="left:1353px;top:106px;width:76px"><span class="x dm" style="left:auto;right:-1px">6/3/202</span></div>
<div class="rh" style="top:126px">6</div>
<div class="abs" style="left:0;top:145px;width:39px;height:1px;background:#c9d8cd"></div>
<div class="hl" style="top:145px"></div>
<div class="nt" style="top:126px"></div>
<div class="c" style="left:43px;top:126px;width:158px"><div class="chip" style="left:7.6px;width:142.7px;background:#ffe5a0;color:#473821"><b class="st" style="left:6px;font-size:13.9px">Monthly Recurring</b><i></i></div></div>
<div class="c" style="left:202px;top:126px;width:315px"><span class="x sb" style="">Complete commissions</span></div>
<div class="c" style="left:518px;top:126px;width:107px"><div class="chip" style="left:8px;width:91.4px;background:#11734b;color:#d4edbc"><b style="left:5.2px;font-size:13.95px">Done</b><i></i></div></div>
<div class="c" style="left:626px;top:126px;width:87px"><div class="chip" style="left:7.6px;width:71.4px;background:#5a3286;color:#e6cff2"><b style="left:6px;font-size:13.6px">Recurr<u>...</u></b><i></i></div></div>
<div class="c" style="left:802px;top:126px;width:87px"><div class="chip" style="left:7.6px;width:71.4px;background:#e8eaed;color:#000"><b style="left:6px;font-size:13.2px">Projec<u>...</u></b><i></i></div></div>
<div class="c" style="left:890px;top:126px;width:174px"><span class="x ss" style="font-size:12.650px;left:2.400px">Ensure commissions are accurate</span></div>
<div class="c" style="left:1066px;top:126px;width:87px"><span class="r dn">6/20/2024</span></div>
<div class="c" style="left:1154px;top:126px;width:110px"><span class="r dn">6/20/2024</span></div>
<div class="c" style="left:1265px;top:126px;width:87px"><span class="r dn">6/7/2024</span></div>
<div class="c" style="left:1353px;top:126px;width:76px"><span class="x dm" style="left:auto;right:-1px">6/3/202</span></div>
<div class="rh" style="top:146px">7</div>
<div class="abs" style="left:0;top:165px;width:39px;height:1px;background:#c9d8cd"></div>
<div class="hl" style="top:165px"></div>
<div class="nt" style="top:146px"></div>
<div class="c" style="left:43px;top:146px;width:158px"><div class="chip" style="left:7.6px;width:142.7px;background:#ffc8aa;color:#753800"><b class="st" style="left:6px;font-size:14.06px">Unplanned</b><i></i></div></div>
<div class="c" style="left:202px;top:146px;width:315px"><span class="x ss" style="">Create Deck</span></div>
<div class="c" style="left:518px;top:146px;width:107px"><div class="chip" style="left:8px;width:91.4px;background:#11734b;color:#d4edbc"><b style="left:5.2px;font-size:13.95px">Done</b><i></i></div></div>
<div class="c" style="left:626px;top:146px;width:87px"><div class="chip" style="left:7.6px;width:71.4px;background:#0a53a8;color:#bfe1f6"><b style="left:6px;font-size:13.8px">High</b><i></i></div></div>
<div class="c" style="left:802px;top:146px;width:87px"><div class="chip sm" style="left:7.6px;width:71.4px;background:#e8eaed;color:#000"><b style="left:6px;font-size:12.3px">Enable<u>...</u></b><i></i></div></div>
<div class="c" style="left:890px;top:146px;width:174px"><span class="x ss" style="font-size:12.650px;left:2.400px">Minimize ramp up period</span></div>
<div class="c" style="left:1066px;top:146px;width:87px"><span class="r dn">6/20/2024</span></div>
<div class="c" style="left:1154px;top:146px;width:110px"><span class="r dn">6/20/2024</span></div>
<div class="c" style="left:1265px;top:146px;width:87px"><span class="r dn">6/11/2024</span></div>
<div class="c" style="left:1353px;top:146px;width:76px"><span class="x dm" style="left:auto;right:-1px">6/10/202</span></div>
<div class="rh" style="top:166px">8</div>
<div class="abs" style="left:0;top:185px;width:39px;height:1px;background:#c9d8cd"></div>
<div class="hl" style="top:185px"></div>
<div class="nt" style="top:166px"></div>
<div class="c" style="left:43px;top:166px;width:158px"><div class="chip" style="left:7.6px;width:142.7px;background:#e6cff2;color:#5a3286"><b class="st" style="left:6px;font-size:13.6px">Weekly Recurring</b><i></i></div></div>
<div class="c" style="left:202px;top:166px;width:315px"><span class="x sb" style="">Batch DQ aged opps</span></div>
<div class="c" style="left:518px;top:166px;width:107px"><div class="chip" style="left:8px;width:91.4px;background:#11734b;color:#d4edbc"><b style="left:5.2px;font-size:13.95px">Done</b><i></i></div></div>
<div class="c" style="left:626px;top:166px;width:87px"><div class="chip" style="left:7.6px;width:71.4px;background:#5a3286;color:#e6cff2"><b style="left:6px;font-size:13.6px">Recurr<u>...</u></b><i></i></div></div>
<div class="c" style="left:802px;top:166px;width:87px"><div class="chip" style="left:7.6px;width:71.4px;background:#e8eaed;color:#000"><b style="left:6px;font-size:13.2px">Tool&nbsp;<u>...</u></b><i></i></div></div>
<div class="c" style="left:890px;top:166px;width:174px"><span class="x ss" style="font-size:12.650px;left:2.400px">Maintain proper hygeine to avoid</span></div>
<div class="c" style="left:1066px;top:166px;width:87px"><span class="r dn">6/20/2024</span></div>
<div class="c" style="left:1154px;top:166px;width:110px"><span class="r dn">6/20/2024</span></div>
<div class="c" style="left:1265px;top:166px;width:87px"><span class="r dn">6/12/2024</span></div>
<div class="c" style="left:1353px;top:166px;width:76px"><span class="x dm" style="left:auto;right:-1px">6/10/202</span></div>
<div class="rh" style="top:186px">9</div>
<div class="abs" style="left:0;top:205px;width:39px;height:1px;background:#c9d8cd"></div>
<div class="hl" style="top:205px"></div>
<div class="nt" style="top:186px"></div>
<div class="c" style="left:43px;top:186px;width:158px"><div class="chip" style="left:7.6px;width:142.7px;background:#ffe5a0;color:#473821"><b class="st" style="left:6px;font-size:13.9px">Monthly Recurring</b><i></i></div></div>
<div class="c" style="left:202px;top:186px;width:315px"><span class="x sb" style="">Complete commissions</span></div>
<div class="c" style="left:518px;top:186px;width:107px"><div class="chip" style="left:8px;width:91.4px;background:#11734b;color:#d4edbc"><b style="left:5.2px;font-size:13.95px">Done</b><i></i></div></div>
<div class="c" style="left:626px;top:186px;width:87px"><div class="chip" style="left:7.6px;width:71.4px;background:#5a3286;color:#e6cff2"><b style="left:6px;font-size:13.6px">Recurr<u>...</u></b><i></i></div></div>
<div class="c" style="left:802px;top:186px;width:87px"><div class="chip" style="left:7.6px;width:71.4px;background:#e8eaed;color:#000"><b style="left:6px;font-size:13.2px">Projec<u>...</u></b><i></i></div></div>
<div class="c" style="left:890px;top:186px;width:174px"><span class="x ss" style="font-size:12.650px;left:2.400px">Ensure commissions are accurate</span></div>
<div class="c" style="left:1066px;top:186px;width:87px"><span class="r dn">6/20/2024</span></div>
<div class="c" style="left:1154px;top:186px;width:110px"><span class="r dn">6/20/2024</span></div>
<div class="c" style="left:1265px;top:186px;width:87px"><span class="r dn">6/12/2024</span></div>
<div class="c" style="left:1353px;top:186px;width:76px"><span class="x dm" style="left:auto;right:-1px">6/10/202</span></div>
<div class="rh" style="top:206px">10</div>
<div class="abs" style="left:0;top:225px;width:39px;height:1px;background:#c9d8cd"></div>
<div class="hl" style="top:225px"></div>
<div class="nt" style="top:206px"></div>
<div class="c" style="left:43px;top:206px;width:158px"><div class="chip" style="left:7.6px;width:142.7px;background:#e6cff2;color:#5a3286"><b class="st" style="left:6px;font-size:13.6px">Weekly Recurring</b><i></i></div></div>
<div class="c" style="left:202px;top:206px;width:315px"><span class="x sb" style="">Update Report</span></div>
<div class="c" style="left:518px;top:206px;width:107px"><div class="chip" style="left:8px;width:91.4px;background:#11734b;color:#d4edbc"><b style="left:5.2px;font-size:13.95px">Done</b><i></i></div></div>
<div class="c" style="left:626px;top:206px;width:87px"><div class="chip" style="left:7.6px;width:71.4px;background:#5a3286;color:#e6cff2"><b style="left:6px;font-size:13.6px">Recurr<u>...</u></b><i></i></div></div>
<div class="c" style="left:802px;top:206px;width:87px"><div class="chip" style="left:7.6px;width:71.4px;background:#e8eaed;color:#000"><b style="left:6px;font-size:13.2px">Repor<u>...</u></b><i></i></div></div>
<div class="c" style="left:890px;top:206px;width:174px"><span class="x ss" style="font-size:12.650px;left:2.400px">Provide accurate view of performance</span></div>
<div class="c" style="left:1066px;top:206px;width:87px"><span class="r dn">6/20/2024</span></div>
<div class="c" style="left:1154px;top:206px;width:110px"><span class="r dn">6/20/2024</span></div>
<div class="c" style="left:1265px;top:206px;width:87px"><span class="r dn">6/13/2024</span></div>
<div class="c" style="left:1353px;top:206px;width:76px"><span class="x dm" style="left:auto;right:-1px">6/10/202</span></div>
<div class="rh" style="top:226px">11</div>
<div class="abs" style="left:0;top:245px;width:39px;height:1px;background:#c9d8cd"></div>
<div class="hl" style="top:245px"></div>
<div class="nt" style="top:226px"></div>
<div class="c" style="left:43px;top:226px;width:158px"><div class="chip" style="left:7.6px;width:142.7px;background:#e6cff2;color:#5a3286"><b class="st" style="left:6px;font-size:13.6px">Weekly Recurring</b><i></i></div></div>
<div class="c" style="left:202px;top:226px;width:315px"><span class="x sb" style="">Run Dash</span></div>
<div class="c" style="left:518px;top:226px;width:107px"><div class="chip" style="left:8px;width:91.4px;background:#11734b;color:#d4edbc"><b style="left:5.2px;font-size:13.95px">Done</b><i></i></div></div>
<div class="c" style="left:626px;top:226px;width:87px"><div class="chip" style="left:7.6px;width:71.4px;background:#5a3286;color:#e6cff2"><b style="left:6px;font-size:13.6px">Recurr<u>...</u></b><i></i></div></div>
<div class="c" style="left:802px;top:226px;width:87px"><div class="chip" style="left:7.6px;width:71.4px;background:#e8eaed;color:#000"><b style="left:6px;font-size:13.2px">Repor<u>...</u></b><i></i></div></div>
<div class="c" style="left:890px;top:226px;width:174px"><span class="x ss" style="font-size:12.650px;left:2.400px">Provide accurate view of performance</span></div>
<div class="c" style="left:1066px;top:226px;width:87px"><span class="r dn">6/20/2024</span></div>
<div class="c" style="left:1154px;top:226px;width:110px"><span class="r dn">6/20/2024</span></div>
<div class="c" style="left:1265px;top:226px;width:87px"><span class="r dn">6/19/2024</span></div>
<div class="c" style="left:1353px;top:226px;width:76px"><span class="x dm" style="left:auto;right:-1px">6/17/202</span></div>
<div class="rh" style="top:246px">12</div>
<div class="abs" style="left:0;top:265px;width:39px;height:1px;background:#c9d8cd"></div>
<div class="hl" style="top:265px"></div>
<div class="nt" style="top:246px"></div>
<div class="c" style="left:43px;top:246px;width:158px"><div class="chip" style="left:7.6px;width:142.7px;background:#ffc8aa;color:#753800"><b class="st" style="left:6px;font-size:14.06px">Unplanned</b><i></i></div></div>
<div class="c" style="left:202px;top:246px;width:315px"><span class="x ss" style="">Create Deck</span></div>
<div class="c" style="left:518px;top:246px;width:107px"><div class="chip" style="left:8px;width:91.4px;background:#11734b;color:#d4edbc"><b style="left:5.2px;font-size:13.95px">Done</b><i></i></div></div>
<div class="c" style="left:626px;top:246px;width:87px"><div class="chip" style="left:7.6px;width:71.4px;background:#0a53a8;color:#bfe1f6"><b style="left:6px;font-size:13.8px">High</b><i></i></div></div>
<div class="c" style="left:714px;top:246px;width:87px"><div class="chip sm" style="left:2.5px;width:76px;background:#e8eaed;color:#000"><b style="left:19.7px;font-size:12.5px">Upgrade<u>...</u></b><svg style="left:5px;top:2.500px" width="8.500" height="8.500" viewBox="0 0 10 10"><rect width="10" height="10" rx="1.200" fill="#1fa64a"/><path d="M1.500 3.700h7M4.200 1.500v7" fill="none" stroke="#fff" stroke-width="1.300"/></svg></div></div>
<div class="c" style="left:802px;top:246px;width:87px"><div class="chip sm" style="left:7.6px;width:71.4px;background:#e8eaed;color:#000"><b style="left:6px;font-size:12.3px">Enable<u>...</u></b><i></i></div></div>
<div class="c" style="left:890px;top:246px;width:174px"><span class="x ss" style="font-size:12.650px;left:2.400px">Minimize ramp up period</span></div>
<div class="c" style="left:1066px;top:246px;width:87px"><span class="r dn">6/20/2024</span></div>
<div class="c" style="left:1154px;top:246px;width:110px"><span class="r dn">6/20/2024</span></div>
<div class="c" style="left:1265px;top:246px;width:87px"><span class="r dn">6/20/2024</span></div>
<div class="c" style="left:1353px;top:246px;width:76px"><span class="x dm" style="left:auto;right:-1px">6/17/202</span></div>
<div class="rh" style="top:266px">13</div>
<div class="abs" style="left:0;top:285px;width:39px;height:1px;background:#c9d8cd"></div>
<div class="hl" style="top:285px"></div>
<div class="nt" style="top:266px"></div>
<div class="c" style="left:43px;top:266px;width:158px"><div class="chip" style="left:7.6px;width:142.7px;background:#d4edbc;color:#11734b"><b class="st" style="left:6px;font-size:13.7px">Planned</b><i></i></div></div>
<div class="c" style="left:202px;top:266px;width:315px"><span class="x ss" style="">Update Google Sheet</span></div>
<div class="c" style="left:518px;top:266px;width:107px"><div class="chip" style="left:8px;width:91.4px;background:#11734b;color:#d4edbc"><b style="left:5.2px;font-size:13.95px">Done</b><i></i></div></div>
<div class="c" style="left:626px;top:266px;width:87px"><div class="chip" style="left:7.6px;width:71.4px;background:#ffe5a0;color:#473821"><b style="left:6px;font-size:13.2px">Low</b><i></i></div></div>
<div class="c" style="left:802px;top:266px;width:87px"><div class="chip sm" style="left:7.6px;width:71.4px;background:#e8eaed;color:#000"><b style="left:6px;font-size:12.3px">Increas<u>...</u></b><i></i></div></div>
<div class="c" style="left:890px;top:266px;width:174px"><span class="x ss" style="font-size:12.650px;left:2.400px">Maximize efficiency</span></div>
<div class="c" style="left:1066px;top:266px;width:87px"><span class="r dn">6/20/2024</span></div>
<div class="c" style="left:1154px;top:266px;width:110px"><span class="r dn">6/20/2024</span></div>
<div class="c" style="left:1265px;top:266px;width:87px"><span class="r dn">6/20/2024</span></div>
<div class="c" style="left:1353px;top:266px;width:76px"><span class="x dm" style="left:auto;right:-1px">6/17/202</span></div>
<div class="rh" style="top:286px">14</div>
<div class="abs" style="left:0;top:305px;width:39px;height:1px;background:#c9d8cd"></div>
<div class="hl" style="top:305px"></div>
<div class="nt" style="top:286px"></div>
<div class="c" style="left:43px;top:286px;width:158px"><div class="chip" style="left:7.6px;width:142.7px;background:#d4edbc;color:#11734b"><b class="st" style="left:6px;font-size:13.7px">Planned</b><i></i></div></div>
<div class="c" style="left:202px;top:286px;width:315px"><span class="x ss" style="">Provide performance summary</span></div>
<div class="c" style="left:518px;top:286px;width:107px"><div class="chip" style="left:8px;width:91.4px;background:#11734b;color:#d4edbc"><b style="left:5.2px;font-size:13.95px">Done</b><i></i></div></div>
<div class="c" style="left:626px;top:286px;width:87px"><div class="chip" style="left:7.6px;width:71.4px;background:#ffc8aa;color:#753800"><b style="left:6px;font-size:13.4px">Medi<u>...</u></b><i></i></div></div>
<div class="c" style="left:802px;top:286px;width:87px"><div class="chip sm" style="left:7.6px;width:71.4px;background:#e8eaed;color:#000"><b style="left:6px;font-size:12.3px">Reporti<u>...</u></b><i></i></div></div>
<div class="c" style="left:890px;top:286px;width:174px"><span class="x ss" style="font-size:12.650px;left:2.400px">Provide accurate view of performance</span></div>
<div class="c" style="left:1066px;top:286px;width:87px"><span class="r dn">6/20/2024</span></div>
<div class="c" style="left:1154px;top:286px;width:110px"><span class="r dn">6/20/2024</span></div>
<div class="c" style="left:1265px;top:286px;width:87px"><span class="r dn">6/20/2024</span></div>
<div class="c" style="left:1353px;top:286px;width:76px"><span class="x dm" style="left:auto;right:-1px">6/17/202</span></div>
<div class="rh" style="top:306px">15</div>
<div class="abs" style="left:0;top:325px;width:39px;height:1px;background:#c9d8cd"></div>
<div class="hl" style="top:325px"></div>
<div class="nt" style="top:306px"></div>
<div class="c" style="left:43px;top:306px;width:158px"><div class="chip" style="left:7.6px;width:142.7px;background:#d4edbc;color:#11734b"><b class="st" style="left:6px;font-size:13.7px">Planned</b><i></i></div></div>
<div class="c" style="left:202px;top:306px;width:315px"><span class="x ss" style="">Provide performance summary</span></div>
<div class="c" style="left:518px;top:306px;width:107px"><div class="chip" style="left:8px;width:91.4px;background:#11734b;color:#d4edbc"><b style="left:5.2px;font-size:13.95px">Done</b><i></i></div></div>
<div class="c" style="left:626px;top:306px;width:87px"><div class="chip" style="left:7.6px;width:71.4px;background:#ffc8aa;color:#753800"><b style="left:6px;font-size:13.4px">Medi<u>...</u></b><i></i></div></div>
<div class="c" style="left:802px;top:306px;width:87px"><div class="chip sm" style="left:7.6px;width:71.4px;background:#e8eaed;color:#000"><b style="left:6px;font-size:12.3px">Reporti<u>...</u></b><i></i></div></div>
<div class="c" style="left:890px;top:306px;width:174px"><span class="x ss" style="font-size:12.650px;left:2.400px">Provide accurate view of performance</span></div>
<div class="c" style="left:1066px;top:306px;width:87px"><span class="r dn">6/20/2024</span></div>
<div class="c" style="left:1154px;top:306px;width:110px"><span class="r dn">6/20/2024</span></div>
<div class="c" style="left:1265px;top:306px;width:87px"><span class="r dn">6/20/2024</span></div>
<div class="c" style="left:1353px;top:306px;width:76px"><span class="x dm" style="left:auto;right:-1px">6/17/202</span></div>
<div class="rh" style="top:326px">16</div>
<div class="abs" style="left:0;top:345px;width:39px;height:1px;background:#c9d8cd"></div>
<div class="hl" style="top:345px"></div>
<div class="nt" style="top:326px"></div>
<div class="c" style="left:43px;top:326px;width:158px"><div class="chip" style="left:7.6px;width:142.7px;background:#ffc8aa;color:#753800"><b class="st" style="left:6px;font-size:14.06px">Unplanned</b><i></i></div></div>
<div class="c" style="left:202px;top:326px;width:315px"><span class="x ss" style="">Create Dashboard</span></div>
<div class="c" style="left:518px;top:326px;width:107px"><div class="chip" style="left:8px;width:91.4px;background:#11734b;color:#d4edbc"><b style="left:5.2px;font-size:13.95px">Done</b><i></i></div></div>
<div class="c" style="left:626px;top:326px;width:87px"><div class="chip" style="left:7.6px;width:71.4px;background:#b10202;color:#ffcfc9"><b style="left:6px;font-size:13.7px">Top</b><i></i></div></div>
<div class="c" style="left:802px;top:326px;width:87px"><div class="chip sm" style="left:7.6px;width:71.4px;background:#e8eaed;color:#000"><b style="left:6px;font-size:12.3px">Reporti<u>...</u></b><i></i></div></div>
<div class="c" style="left:890px;top:326px;width:174px"><span class="x ss" style="font-size:12.650px;left:2.400px">Provide accurate view of performance</span></div>
<div class="c" style="left:1066px;top:326px;width:87px"><span class="r dn">6/20/2024</span></div>
<div class="c" style="left:1154px;top:326px;width:110px"><span class="r dn">6/20/2024</span></div>
<div class="c" style="left:1265px;top:326px;width:87px"><span class="r dn">6/20/2024</span></div>
<div class="c" style="left:1353px;top:326px;width:76px"><span class="x dm" style="left:auto;right:-1px">6/17/202</span></div>
<div class="rh" style="top:346px">17</div>
<div class="abs" style="left:0;top:365px;width:39px;height:1px;background:#c9d8cd"></div>
<div class="hl" style="top:365px"></div>
<div class="nt" style="top:346px"></div>
<div class="c" style="left:43px;top:346px;width:158px"><div class="chip" style="left:7.6px;width:142.7px;background:#ffc8aa;color:#753800"><b class="st" style="left:6px;font-size:14.06px">Unplanned</b><i></i></div></div>
<div class="c" style="left:202px;top:346px;width:315px"><span class="x ss" style="">Create Dashboard</span></div>
<div class="c" style="left:518px;top:346px;width:107px"><div class="chip" style="left:8px;width:91.4px;background:#11734b;color:#d4edbc"><b style="left:5.2px;font-size:13.95px">Done</b><i></i></div></div>
<div class="c" style="left:626px;top:346px;width:87px"><div class="chip" style="left:7.6px;width:71.4px;background:#b10202;color:#ffcfc9"><b style="left:6px;font-size:13.7px">Top</b><i></i></div></div>
<div class="c" style="left:802px;top:346px;width:87px"><div class="chip sm" style="left:7.6px;width:71.4px;background:#e8eaed;color:#000"><b style="left:6px;font-size:12.3px">Reporti<u>...</u></b><i></i></div></div>
<div class="c" style="left:890px;top:346px;width:174px"><span class="x ss" style="font-size:12.650px;left:2.400px">Provide accurate view of performance</span></div>
<div class="c" style="left:1066px;top:346px;width:87px"><span class="r dn">6/20/2024</span></div>
<div class="c" style="left:1154px;top:346px;width:110px"><span class="r dn">6/20/2024</span></div>
<div class="c" style="left:1265px;top:346px;width:87px"><span class="r dn">6/20/2024</span></div>
<div class="c" style="left:1353px;top:346px;width:76px"><span class="x dm" style="left:auto;right:-1px">6/17/202</span></div>
<div class="rh" style="top:366px">18</div>
<div class="abs" style="left:0;top:385px;width:39px;height:1px;background:#c9d8cd"></div>
<div class="hl" style="top:385px"></div>
<div class="nt" style="top:366px"></div>
<div class="c" style="left:43px;top:366px;width:158px"><div class="chip" style="left:7.6px;width:142.7px;background:#ffc8aa;color:#753800"><b style="left:6px;font-size:14.06px">Unplanned</b><i></i></div></div>
<div class="c" style="left:202px;top:366px;width:315px"><span class="x sg" style="font-size:12.700px;bottom:1px">Create new user</span></div>
<div class="c" style="left:518px;top:366px;width:107px"><div class="chip" style="left:8px;width:91.4px;background:#11734b;color:#d4edbc"><b style="left:5.2px;font-size:13.95px">Done</b><i></i></div></div>
<div class="c" style="left:626px;top:366px;width:87px"><div class="chip" style="left:7.6px;width:71.4px;background:#b10202;color:#ffcfc9"><b style="left:6px;font-size:13.7px">Top</b><i></i></div></div>
<div class="c" style="left:802px;top:366px;width:87px"><div class="chip sm" style="left:7.6px;width:71.4px;background:#e8eaed;color:#000"><b style="left:6px;font-size:12.3px">Enable<u>...</u></b><i></i></div></div>
<div class="c" style="left:890px;top:366px;width:174px"><span class="x ss" style="font-size:12.650px;left:2.400px">Minimize ramp up period</span></div>
<div class="c" style="left:1066px;top:366px;width:87px"><span class="r dn">6/20/2024</span></div>
<div class="c" style="left:1154px;top:366px;width:110px"><span class="r dn">6/20/2024</span></div>
<div class="c" style="left:1265px;top:366px;width:87px"><span class="r dn">6/20/2024</span></div>
<div class="c" style="left:1353px;top:366px;width:76px"><span class="x dm" style="left:auto;right:-1px">6/17/202</span></div>
<div class="rh" style="top:386px">19</div>
<div class="abs" style="left:0;top:405px;width:39px;height:1px;background:#c9d8cd"></div>
<div class="hl" style="top:405px"></div>
<div class="nt" style="top:386px"></div>
<div class="c" style="left:43px;top:386px;width:158px"><div class="chip" style="left:7.6px;width:142.7px;background:#e6cff2;color:#5a3286"><b style="left:6px;font-size:13.6px">Weekly Recurring</b><i></i></div></div>
<div class="c" style="left:202px;top:386px;width:315px"><span class="x sg" style="font-size:14px">Update Report</span></div>
<div class="c" style="left:518px;top:386px;width:107px"><div class="chip" style="left:8px;width:91.4px;background:#11734b;color:#d4edbc"><b style="left:5.2px;font-size:13.95px">Done</b><i></i></div></div>
<div class="c" style="left:626px;top:386px;width:87px"><div class="chip" style="left:7.6px;width:71.4px;background:#5a3286;color:#e6cff2"><b style="left:6px;font-size:13.6px">Recurr<u>...</u></b><i></i></div></div>
<div class="c" style="left:802px;top:386px;width:87px"><div class="chip" style="left:7.6px;width:71.4px;background:#e8eaed;color:#000"><b style="left:6px;font-size:13.2px">Repor<u>...</u></b><i></i></div></div>
<div class="c" style="left:890px;top:386px;width:174px"><span class="x ss" style="font-size:12.650px;left:2.400px">Provide accurate view of performance</span></div>
<div class="c" style="left:1066px;top:386px;width:87px"><span class="r dn">6/20/2024</span></div>
<div class="c" style="left:1154px;top:386px;width:110px"><span class="r da">6/20/2024</span></div>
<div class="c" style="left:1265px;top:386px;width:87px"><span class="r da">6/20/2024</span></div>
<div class="c" style="left:1353px;top:386px;width:76px"><span class="x dm" style="left:auto;right:-1px">6/17/202</span></div>
<div class="rh" style="top:406px">20</div>
<div class="abs" style="left:0;top:425px;width:39px;height:1px;background:#c9d8cd"></div>
<div class="hl" style="top:425px"></div>
<div class="c" style="left:43px;top:406px;width:158px"><div class="chip" style="left:7.6px;width:142.7px;background:#ffc8aa;color:#753800"><b style="left:6px;font-size:14.06px">Unplanned</b><i></i></div></div>
<div class="c" style="left:202px;top:406px;width:315px"><span class="x sa" style="">Enter sales data into the forecasting tool.</span></div>
<div class="c" style="left:518px;top:406px;width:107px"><div class="chip" style="left:8px;width:91.4px;background:#11734b;color:#d4edbc"><b style="left:5.2px;font-size:13.95px">Done</b><i></i></div></div>
<div class="c" style="left:626px;top:406px;width:87px"><div class="chip" style="left:7.6px;width:71.4px;background:#b10202;color:#ffcfc9"><b style="left:6px;font-size:13.7px">Top</b><i></i></div></div>
<div class="c" style="left:802px;top:406px;width:87px"><div class="chip" style="left:7.6px;width:71.4px;background:#e8eaed;color:#000"><b style="left:6px;font-size:13.2px">Repor<u>...</u></b><i></i></div></div>
<div class="c" style="left:890px;top:406px;width:174px"><span class="x ss" style="font-size:12.650px;left:2.400px">Provide accurate view of performance</span></div>
<div class="c" style="left:1066px;top:406px;width:87px"><span class="r da">6/23/2024</span></div>
<div class="c" style="left:1154px;top:406px;width:110px"><span class="r da">6/30/2023</span></div>
<div class="c" style="left:1265px;top:406px;width:87px"><span class="r da">7/3/2023</span></div>
<div class="c" style="left:1353px;top:406px;width:76px"><span class="x dm" style="left:auto;right:-1px">7/3/202</span></div>
<div class="rh" style="top:426px">21</div>
<div class="abs" style="left:0;top:445px;width:39px;height:1px;background:#c9d8cd"></div>
<div class="hl" style="top:445px"></div>
<div class="c" style="left:43px;top:426px;width:158px"><div class="chip" style="left:7.6px;width:142.7px;background:#ffc8aa;color:#753800"><b style="left:6px;font-size:14.06px">Unplanned</b><i></i></div></div>
<div class="c" style="left:202px;top:426px;width:315px"><span class="x sa" style="">Configure salesforce automation workflows for efficiency.</span></div>
<div class="c" style="left:518px;top:426px;width:107px"><div class="chip" style="left:8px;width:91.4px;background:#11734b;color:#d4edbc"><b style="left:5.2px;font-size:13.95px">Done</b><i></i></div></div>
<div class="c" style="left:626px;top:426px;width:87px"><div class="chip" style="left:7.6px;width:71.4px;background:#0a53a8;color:#bfe1f6"><b style="left:6px;font-size:13.8px">High</b><i></i></div></div>
<div class="c" style="left:802px;top:426px;width:87px"><div class="chip" style="left:7.6px;width:71.4px;background:#e8eaed;color:#000"><b style="left:6px;font-size:13.2px">Increa<u>...</u></b><i></i></div></div>
<div class="c" style="left:890px;top:426px;width:174px"><span class="x ss" style="font-size:12.650px;left:2.400px">Maximize efficiency</span></div>
<div class="c" style="left:1066px;top:426px;width:87px"><span class="r da">6/30/2023</span></div>
<div class="c" style="left:1154px;top:426px;width:110px"><span class="r da">7/1/2023</span></div>
<div class="c" style="left:1265px;top:426px;width:87px"><span class="r da">7/4/2023</span></div>
<div class="c" style="left:1353px;top:426px;width:76px"><span class="x dm" style="left:auto;right:-1px">7/3/202</span></div>
<div class="rh" style="top:446px">22</div>
<div class="abs" style="left:0;top:465px;width:39px;height:1px;background:#c9d8cd"></div>
<div class="hl" style="top:465px"></div>
<div class="c" style="left:43px;top:446px;width:158px"><div class="chip" style="left:7.6px;width:142.7px;background:#ffc8aa;color:#753800"><b style="left:6px;font-size:14.06px">Unplanned</b><i></i></div></div>
<div class="c" style="left:202px;top:446px;width:315px"><span class="x sa" style="">Integrate a customer relationship management (CRM) with a</span></div>
<div class="c" style="left:518px;top:446px;width:107px"><div class="chip" style="left:8px;width:91.4px;background:#11734b;color:#d4edbc"><b style="left:5.2px;font-size:13.95px">Done</b><i></i></div></div>
<div class="c" style="left:626px;top:446px;width:87px"><div class="chip" style="left:7.6px;width:71.4px;background:#ffc8aa;color:#753800"><b style="left:6px;font-size:13.4px">Medi<u>...</u></b><i></i></div></div>
<div class="c" style="left:802px;top:446px;width:87px"><div class="chip" style="left:7.6px;width:71.4px;background:#e8eaed;color:#000"><b style="left:6px;font-size:13.2px">Increa<u>...</u></b><i></i></div></div>
<div class="c" style="left:890px;top:446px;width:174px"><span class="x ss" style="font-size:12.650px;left:2.400px">Maximize efficiency</span></div>
<div class="c" style="left:1066px;top:446px;width:87px"><span class="r da">7/5/2023</span></div>
<div class="c" style="left:1154px;top:446px;width:110px"><span class="r da">7/6/2023</span></div>
<div class="c" style="left:1265px;top:446px;width:87px"><span class="r da">7/9/2023</span></div>
<div class="c" style="left:1353px;top:446px;width:76px"><span class="x dm" style="left:auto;right:-1px">7/10/202</span></div>
<div class="rh" style="top:466px">23</div>
<div class="abs" style="left:0;top:485px;width:39px;height:1px;background:#c9d8cd"></div>
<div class="hl" style="top:485px"></div>
<div class="c" style="left:43px;top:466px;width:158px"><div class="chip" style="left:7.6px;width:142.7px;background:#d4edbc;color:#11734b"><b style="left:6px;font-size:13.7px">Planned</b><i></i></div></div>
<div class="c" style="left:202px;top:466px;width:315px"><span class="x sa" style="">Develop and deliver training sessions on RevOps tools.</span></div>
<div class="c" style="left:518px;top:466px;width:107px"><div class="chip" style="left:8px;width:91.4px;background:#11734b;color:#d4edbc"><b style="left:5.2px;font-size:13.95px">Done</b><i></i></div></div>
<div class="c" style="left:626px;top:466px;width:87px"><div class="chip" style="left:7.6px;width:71.4px;background:#ffe5a0;color:#473821"><b style="left:6px;font-size:13.2px">Low</b><i></i></div></div>
<div class="c" style="left:802px;top:466px;width:87px"><div class="chip" style="left:7.6px;width:71.4px;background:#e8eaed;color:#000"><b style="left:6px;font-size:13.2px">Projec<u>...</u></b><i></i></div></div>
<div class="c" style="left:890px;top:466px;width:174px"><span class="x sa" style="left:2px">Minimize ramp up needed for tools</span></div>
<div class="c" style="left:1066px;top:466px;width:87px"><span class="r da">7/6/2023</span></div>
<div class="c" style="left:1154px;top:466px;width:110px"><span class="r da">7/7/2023</span></div>
<div class="c" style="left:1265px;top:466px;width:87px"><span class="r da">7/10/2023</span></div>
<div class="c" style="left:1353px;top:466px;width:76px"><span class="x dm" style="left:auto;right:-1px">7/10/202</span></div>
<div class="rh" style="top:486px">24</div>
<div class="abs" style="left:0;top:505px;width:39px;height:1px;background:#c9d8cd"></div>
<div class="hl" style="top:505px"></div>
<div class="c" style="left:43px;top:486px;width:158px"><div class="chip" style="left:7.6px;width:142.7px;background:#d4edbc;color:#11734b"><b style="left:6px;font-size:13.7px">Planned</b><i></i></div></div>
<div class="c" style="left:202px;top:486px;width:315px"><span class="x sa" style="">Identify best practices for collaboration across departments.</span></div>
<div class="c" style="left:518px;top:486px;width:107px"><div class="chip" style="left:8px;width:91.4px;background:#11734b;color:#d4edbc"><b style="left:5.2px;font-size:13.95px">Done</b><i></i></div></div>
<div class="c" style="left:626px;top:486px;width:87px"><div class="chip" style="left:7.6px;width:71.4px;background:#b10202;color:#ffcfc9"><b style="left:6px;font-size:13.7px">Top</b><i></i></div></div>
<div class="c" style="left:802px;top:486px;width:87px"><div class="chip" style="left:7.6px;width:71.4px;background:#e8eaed;color:#000"><b style="left:6px;font-size:13.2px">Projec<u>...</u></b><i></i></div></div>
<div class="c" style="left:890px;top:486px;width:174px"><span class="x sa" style="left:2px">Ensure cohesion across departments</span></div>
<div class="c" style="left:1066px;top:486px;width:87px"><span class="r da">7/12/2023</span></div>
<div class="c" style="left:1154px;top:486px;width:110px"><span class="r da">7/13/2023</span></div>
<div class="c" style="left:1265px;top:486px;width:87px"><span class="r da">7/16/2023</span></div>
<div class="c" style="left:1353px;top:486px;width:76px"><span class="x dm" style="left:auto;right:-1px">7/17/202</span></div>
<div class="rh" style="top:506px">25</div>
<div class="abs" style="left:0;top:525px;width:39px;height:1px;background:#c9d8cd"></div>
<div class="hl" style="top:525px"></div>
<div class="c" style="left:43px;top:506px;width:158px"><div class="chip" style="left:7.6px;width:142.7px;background:#d4edbc;color:#11734b"><b style="left:6px;font-size:13.7px">Planned</b><i></i></div></div>
<div class="c" style="left:202px;top:506px;width:315px"><span class="x sa" style="">Partner with marketing to leverage customer data for targeted</span></div>
<div class="c" style="left:518px;top:506px;width:107px"><div class="chip" style="left:8px;width:91.4px;background:#11734b;color:#d4edbc"><b style="left:5.2px;font-size:13.95px">Done</b><i></i></div></div>
<div class="c" style="left:626px;top:506px;width:87px"><div class="chip" style="left:7.6px;width:71.4px;background:#b10202;color:#ffcfc9"><b style="left:6px;font-size:13.7px">Top</b><i></i></div></div>
<div class="c" style="left:802px;top:506px;width:87px"><div class="chip" style="left:7.6px;width:71.4px;background:#e8eaed;color:#000"><b style="left:6px;font-size:13.2px">Tool&nbsp;<u>...</u></b><i></i></div></div>
<div class="c" style="left:890px;top:506px;width:174px"><span class="x ss" style="font-size:12.650px;left:2.400px">Maintain proper hygeine to avoid</span></div>
<div class="c" style="left:1066px;top:506px;width:87px"><span class="r da">7/16/2023</span></div>
<div class="c" style="left:1154px;top:506px;width:110px"><span class="r da">7/17/2023</span></div>
<div class="c" style="left:1265px;top:506px;width:87px"><span class="r da">7/20/2023</span></div>
<div class="c" style="left:1353px;top:506px;width:76px"><span class="x dm" style="left:auto;right:-1px">7/17/202</span></div>
<div class="rh" style="top:526px">26</div>
<div class="abs" style="left:0;top:545px;width:39px;height:1px;background:#c9d8cd"></div>
<div class="hl" style="top:545px"></div>
<div class="c" style="left:43px;top:526px;width:158px"><div class="chip" style="left:7.6px;width:142.7px;background:#ffc8aa;color:#753800"><b style="left:6px;font-size:14.06px">Unplanned</b><i></i></div></div>
<div class="c" style="left:202px;top:526px;width:315px"><span class="x sa" style="">Facilitate joint business planning sessions between sales and</span></div>
<div class="c" style="left:518px;top:526px;width:107px"><div class="chip" style="left:8px;width:91.4px;background:#11734b;color:#d4edbc"><b style="left:5.2px;font-size:13.95px">Done</b><i></i></div></div>
<div class="c" style="left:626px;top:526px;width:87px"><div class="chip" style="left:7.6px;width:71.4px;background:#0a53a8;color:#bfe1f6"><b style="left:6px;font-size:13.8px">High</b><i></i></div></div>
<div class="c" style="left:802px;top:526px;width:87px"><div class="chip" style="left:7.6px;width:71.4px;background:#e8eaed;color:#000"><b style="left:6px;font-size:13.2px">Projec<u>...</u></b><i></i></div></div>
<div class="c" style="left:890px;top:526px;width:174px"><span class="x sa" style="left:2px">Ensure cohesion across departments</span></div>
<div class="c" style="left:1066px;top:526px;width:87px"><span class="r da">7/18/2023</span></div>
<div class="c" style="left:1154px;top:526px;width:110px"><span class="r da">7/19/2023</span></div>
<div class="c" style="left:1265px;top:526px;width:87px"><span class="r da">7/22/2023</span></div>
<div class="c" style="left:1353px;top:526px;width:76px"><span class="x dm" style="left:auto;right:-1px">7/24/202</span></div>
<div class="rh" style="top:546px">27</div>
<div class="abs" style="left:0;top:565px;width:39px;height:1px;background:#c9d8cd"></div>
<div class="hl" style="top:565px"></div>
<div class="c" style="left:43px;top:546px;width:158px"><div class="chip" style="left:7.6px;width:142.7px;background:#d4edbc;color:#11734b"><b style="left:6px;font-size:13.7px">Planned</b><i></i></div></div>
<div class="c" style="left:202px;top:546px;width:315px"><span class="x sa" style="">Create custom dashboards for sales pipeline visualization.</span></div>
<div class="c" style="left:518px;top:546px;width:107px"><div class="chip" style="left:8px;width:91.4px;background:#11734b;color:#d4edbc"><b style="left:5.2px;font-size:13.95px">Done</b><i></i></div></div>
<div class="c" style="left:626px;top:546px;width:87px"><div class="chip" style="left:7.6px;width:71.4px;background:#0a53a8;color:#bfe1f6"><b style="left:6px;font-size:13.8px">High</b><i></i></div></div>
<div class="c" style="left:802px;top:546px;width:87px"><div class="chip" style="left:7.6px;width:71.4px;background:#e8eaed;color:#000"><b style="left:6px;font-size:13.2px">Repor<u>...</u></b><i></i></div></div>
<div class="c" style="left:890px;top:546px;width:174px"><span class="x ss" style="font-size:12.650px;left:2.400px">Provide accurate view of performance</span></div>
<div class="c" style="left:1066px;top:546px;width:87px"><span class="r da">7/19/2023</span></div>
<div class="c" style="left:1154px;top:546px;width:110px"><span class="r da">7/20/2023</span></div>
<div class="c" style="left:1265px;top:546px;width:87px"><span class="r da">7/23/2023</span></div>
<div class="c" style="left:1353px;top:546px;width:76px"><span class="x dm" style="left:auto;right:-1px">7/24/202</span></div>
<div class="rh" style="top:566px">28</div>
<div class="abs" style="left:0;top:585px;width:39px;height:1px;background:#c9d8cd"></div>
<div class="hl" style="top:585px"></div>
<div class="c" style="left:43px;top:566px;width:158px"><div class="chip" style="left:7.6px;width:142.7px;background:#ffc8aa;color:#753800"><b style="left:6px;font-size:14.06px">Unplanned</b><i></i></div></div>
<div class="c" style="left:202px;top:566px;width:315px"><span class="x sa" style="">Analyze win/loss data to identify areas for sales improvement</span></div>
<div class="c" style="left:518px;top:566px;width:107px"><div class="chip" style="left:8px;width:91.4px;background:#11734b;color:#d4edbc"><b style="left:5.2px;font-size:13.95px">Done</b><i></i></div></div>
<div class="c" style="left:626px;top:566px;width:87px"><div class="chip" style="left:7.6px;width:71.4px;background:#ffc8aa;color:#753800"><b style="left:6px;font-size:13.4px">Medi<u>...</u></b><i></i></div></div>
<div class="c" style="left:802px;top:566px;width:87px"><div class="chip" style="left:7.6px;width:71.4px;background:#e8eaed;color:#000"><b style="left:6px;font-size:13.2px">Increa<u>...</u></b><i></i></div></div>
<div class="c" style="left:890px;top:566px;width:174px"><span class="x ss" style="font-size:12.650px;left:2.400px">Maximize efficiency</span></div>
<div class="c" style="left:1066px;top:566px;width:87px"><span class="r da">7/21/2023</span></div>
<div class="c" style="left:1154px;top:566px;width:110px"><span class="r da">7/22/2023</span></div>
<div class="c" style="left:1265px;top:566px;width:87px"><span class="r da">7/25/2023</span></div>
<div class="c" style="left:1353px;top:566px;width:76px"><span class="x dm" style="left:auto;right:-1px">7/24/202</span></div>
<div class="rh" style="top:586px">29</div>
<div class="abs" style="left:0;top:605px;width:39px;height:1px;background:#c9d8cd"></div>
<div class="hl" style="top:605px"></div>
<div class="c" style="left:43px;top:586px;width:158px"><div class="chip" style="left:7.6px;width:142.7px;background:#d4edbc;color:#11734b"><b style="left:6px;font-size:13.7px">Planned</b><i></i></div></div>
<div class="c" style="left:202px;top:586px;width:315px"><span class="x sa" style="">Develop internal controls for ensuring revenue process compliance</span></div>
<div class="c" style="left:518px;top:586px;width:107px"><div class="chip" style="left:8px;width:91.4px;background:#11734b;color:#d4edbc"><b style="left:5.2px;font-size:13.95px">Done</b><i></i></div></div>
<div class="c" style="left:626px;top:586px;width:87px"><div class="chip" style="left:7.6px;width:71.4px;background:#ffe5a0;color:#473821"><b style="left:6px;font-size:13.2px">Low</b><i></i></div></div>
<div class="c" style="left:802px;top:586px;width:87px"><div class="chip" style="left:7.6px;width:71.4px;background:#e8eaed;color:#000"><b style="left:6px;font-size:13.2px">Impro<u>...</u></b><i></i></div></div>
<div class="c" style="left:890px;top:586px;width:174px"><span class="x sa" style="left:2px">Maximize profit and minimize CAC</span></div>
<div class="c" style="left:1066px;top:586px;width:87px"><span class="r da">8/9/2023</span></div>
<div class="c" style="left:1154px;top:586px;width:110px"><span class="r da">8/10/2023</span></div>
<div class="c" style="left:1265px;top:586px;width:87px"><span class="r da">8/13/2023</span></div>
<div class="c" style="left:1353px;top:586px;width:76px"><span class="x dm" style="left:auto;right:-1px">8/14/202</span></div>
<div class="rh" style="top:606px">30</div>
<div class="abs" style="left:0;top:625px;width:39px;height:1px;background:#c9d8cd"></div>
<div class="hl" style="top:625px"></div>
<div class="c" style="left:43px;top:606px;width:158px"><div class="chip" style="left:7.6px;width:142.7px;background:#ffc8aa;color:#753800"><b style="left:6px;font-size:14.06px">Unplanned</b><i></i></div></div>
<div class="c" style="left:202px;top:606px;width:315px"><span class="x sa" style="">Identify and mitigate potential revenue recognition risks.</span></div>
<div class="c" style="left:518px;top:606px;width:107px"><div class="chip" style="left:8px;width:91.4px;background:#11734b;color:#d4edbc"><b style="left:5.2px;font-size:13.95px">Done</b><i></i></div></div>
<div class="c" style="left:626px;top:606px;width:87px"><div class="chip" style="left:7.6px;width:71.4px;background:#5a3286;color:#e6cff2"><b style="left:6px;font-size:13.6px">Recurr<u>...</u></b><i></i></div></div>
<div class="c" style="left:802px;top:606px;width:87px"><div class="chip" style="left:7.6px;width:71.4px;background:#e8eaed;color:#000"><b style="left:6px;font-size:13.2px">Impro<u>...</u></b><i></i></div></div>
<div class="c" style="left:890px;top:606px;width:174px"><span class="x sa" style="left:2px">Maximize profit and minimize CAC</span></div>
<div class="c" style="left:1066px;top:606px;width:87px"><span class="r da">8/14/2023</span></div>
<div class="c" style="left:1154px;top:606px;width:110px"><span class="r da">8/15/2023</span></div>
<div class="c" style="left:1265px;top:606px;width:87px"><span class="r da">8/18/2023</span></div>
<div class="c" style="left:1353px;top:606px;width:76px"><span class="x dm" style="left:auto;right:-1px">8/14/202</span></div>
<div class="rh" style="top:626px">31</div>
<div class="abs" style="left:0;top:645px;width:39px;height:1px;background:#c9d8cd"></div>
<div class="hl" style="top:645px"></div>
<div class="c" style="left:43px;top:626px;width:158px"><div class="chip" style="left:7.6px;width:142.7px;background:#e6cff2;color:#5a3286"><b style="left:6px;font-size:13.6px">Weekly Recurring</b><i></i></div></div>
<div class="c" style="left:202px;top:626px;width:315px"><span class="x sa" style="">Develop a customer success program to foster long-term customer</span></div>
<div class="c" style="left:518px;top:626px;width:107px"><div class="chip" style="left:8px;width:91.4px;background:#11734b;color:#d4edbc"><b style="left:5.2px;font-size:13.95px">Done</b><i></i></div></div>
<div class="c" style="left:626px;top:626px;width:87px"><div class="chip" style="left:7.6px;width:71.4px;background:#5a3286;color:#e6cff2"><b style="left:6px;font-size:13.6px">Recurr<u>...</u></b><i></i></div></div>
<div class="c" style="left:802px;top:626px;width:87px"><div class="chip" style="left:7.6px;width:71.4px;background:#e8eaed;color:#000"><b style="left:6px;font-size:13.2px">Projec<u>...</u></b><i></i></div></div>
<div class="c" style="left:890px;top:626px;width:174px"><span class="x sa" style="left:2px">Ensure cohesion across departments</span></div>
<div class="c" style="left:1066px;top:626px;width:87px"><span class="r da">8/14/2023</span></div>
<div class="c" style="left:1154px;top:626px;width:110px"><span class="r da">8/15/2023</span></div>
<div class="c" style="left:1265px;top:626px;width:87px"><span class="r da">8/18/2023</span></div>
<div class="c" style="left:1353px;top:626px;width:76px"><span class="x dm" style="left:auto;right:-1px">8/14/202</span></div>
<div class="rh" style="top:646px">32</div>
<div class="abs" style="left:0;top:665px;width:39px;height:1px;background:#c9d8cd"></div>
<div class="hl" style="top:665px"></div>
<div class="c" style="left:43px;top:646px;width:158px"><div class="chip" style="left:7.6px;width:142.7px;background:#e6cff2;color:#5a3286"><b style="left:6px;font-size:13.6px">Weekly Recurring</b><i></i></div></div>
<div class="c" style="left:202px;top:646px;width:315px"><span class="x sa" style="">Conduct basic data quality checks on lead and deal data</span></div>
<div class="c" style="left:518px;top:646px;width:107px"><div class="chip" style="left:8px;width:91.4px;background:#11734b;color:#d4edbc"><b style="left:5.2px;font-size:13.95px">Done</b><i></i></div></div>
<div class="c" style="left:626px;top:646px;width:87px"><div class="chip" style="left:7.6px;width:71.4px;background:#b10202;color:#ffcfc9"><b style="left:6px;font-size:13.7px">Top</b><i></i></div></div>
<div class="c" style="left:802px;top:646px;width:87px"><div class="chip" style="left:7.6px;width:71.4px;background:#e8eaed;color:#000"><b style="left:6px;font-size:13.2px">Specia<u>...</u></b><i></i></div></div>
<div class="c" style="left:890px;top:646px;width:174px"><span class="x sa" style="left:2px">Provide an a strategic view on the</span></div>
<div class="c" style="left:1066px;top:646px;width:87px"><span class="r da">8/14/2023</span></div>
<div class="c" style="left:1154px;top:646px;width:110px"><span class="r da">8/15/2023</span></div>
<div class="c" style="left:1265px;top:646px;width:87px"><span class="r da">8/18/2023</span></div>
<div class="c" style="left:1353px;top:646px;width:76px"><span class="x dm" style="left:auto;right:-1px">8/14/202</span></div>
<div class="vl" style="left:42px;top:46px;height:613px"></div>
<div class="vl" style="left:201px;top:46px;height:613px"></div>
<div class="vl" style="left:517px;top:46px;height:613px"></div>
<div class="vl" style="left:625px;top:46px;height:613px"></div>
<div class="vl" style="left:713px;top:46px;height:613px"></div>
<div class="vl" style="left:801px;top:46px;height:613px"></div>
<div class="vl" style="left:889px;top:46px;height:613px"></div>
<div class="vl" style="left:1065px;top:46px;height:613px"></div>
<div class="vl" style="left:1153px;top:46px;height:613px"></div>
<div class="vl" style="left:1264px;top:46px;height:613px"></div>
<div class="vl" style="left:1352px;top:46px;height:613px"></div>
<div class="abs" style="left:1429px;top:1px;width:11px;height:21px;background:#f8f9fa"></div>
<div class="abs" style="left:1429px;top:22px;width:11px;height:637px;background:#fff;border-left:1px solid #e8eaed"></div>
<div class="abs" style="left:1429px;top:41.900px;width:11px;height:3.600px;background:#dfe3ea"></div>
<div class="abs" style="left:1431.500px;top:47px;width:7.200px;height:22px;border-radius:4px;background:#dadce0"></div>
<div class="abs" style="left:0;top:659px;width:1440px;height:10px;background:#fff"></div>
<div class="abs" style="left:0;top:659px;width:39px;height:10px;background:#f8f9fa"></div>
<div class="abs" style="left:40px;top:659px;width:1389px;height:1px;background:#e8eaed"></div>
<div class="abs" style="left:41.500px;top:660.700px;width:742px;height:7px;border-radius:4px;background:#dadce0"></div>
<div class="abs" style="left:1430px;top:631px;width:10px;height:28px;background:#f3f4f5"></div>
<div class="abs" style="left:1430px;top:644px;width:10px;height:1px;background:#d8e2f3"></div>
<div class="abs" style="left:1403px;top:659px;width:27px;height:10px;background:#f3f4f5"></div>
<div class="abs" style="left:1416px;top:659px;width:1px;height:10px;background:#e3e6ea"></div>
<div class="abs" style="left:1430px;top:659px;width:10px;height:10px;background:#f8f9fa"></div>
<div class="abs" style="left:1432px;top:635.9px;border-left:3px solid transparent;border-right:3px solid transparent;border-bottom:3px solid #b5b7ba"></div>
<div class="abs" style="left:1432px;top:650.3px;border-left:3px solid transparent;border-right:3px solid transparent;border-top:3px solid #b5b7ba"></div>
<div class="abs" style="left:1407.5px;top:661.2px;border-top:3px solid transparent;border-bottom:3px solid transparent;border-right:3px solid #b5b7ba"></div>
<div class="abs" style="left:1421.9px;top:661.2px;border-top:3px solid transparent;border-bottom:3px solid transparent;border-left:3px solid #b5b7ba"></div>
<div class="abs" style="left:39.500px;top:38.400px;width:6px;height:6px;border-radius:50%;background:#0b57d0;border:.8px solid #fff;box-sizing:content-box"></div>
</div>
<div class="abs" style="left:0;top:787px;width:1445px;height:33px;background:#f9fbfd"></div>
<div class="abs" style="left:0;top:787px;width:1440px;height:1px;background:#e3e6e8"></div>
<div class="abs" style="left:325px;top:787px;width:70px;height:33px;background:#e1e9f7"></div>
<div class="abs" style="left:48.300px;top:804.400px;width:10.400px;height:1.300px;background:#444746"></div><div class="abs" style="left:52.850px;top:799.850px;width:1.300px;height:10.400px;background:#444746"></div>
<div class="abs" style="left:81.500px;top:800.5px;width:13px;height:1.500px;background:#444746"></div>
<div class="abs" style="left:81.500px;top:804.3px;width:13px;height:1.500px;background:#444746"></div>
<div class="abs" style="left:81.500px;top:808.1px;width:13px;height:1.500px;background:#444746"></div>
<div class="t" style="left:127.5px;top:798px;font-size:13.4px;color:#444746;font-weight:400;-webkit-text-stroke:.25px">Task List</div>
<div class="abs" style="left:189.5px;top:803.8px;border-left:4px solid transparent;border-right:4px solid transparent;border-top:4px solid #444746"></div>
<div class="t" style="left:219.4px;top:798px;font-size:13.1px;color:#444746;font-weight:400;-webkit-text-stroke:.25px">Parked Tasks</div>
<div class="abs" style="left:307.3px;top:803.8px;border-left:4px solid transparent;border-right:4px solid transparent;border-top:4px solid #444746"></div>
<div class="t" style="left:335.6px;top:798.5px;font-size:12.56px;color:#0b57d0;font-weight:700;">Done</div>
<div class="abs" style="left:376.8px;top:803.8px;border-left:4px solid transparent;border-right:4px solid transparent;border-top:4px solid #0b57d0"></div>
<div class="t" style="left:405.5px;top:798px;font-size:13.6px;color:#444746;font-weight:400;-webkit-text-stroke:.25px">Visualizations</div>
<div class="abs" style="left:497.5px;top:803.8px;border-left:4px solid transparent;border-right:4px solid transparent;border-top:4px solid #444746"></div>
<svg style="left:0;top:811px" width="9" height="9" viewBox="0 0 9 9"><path d="M0 0A9 9 0 0 0 9 9H0z" fill="#000"/></svg>
</body></html>
